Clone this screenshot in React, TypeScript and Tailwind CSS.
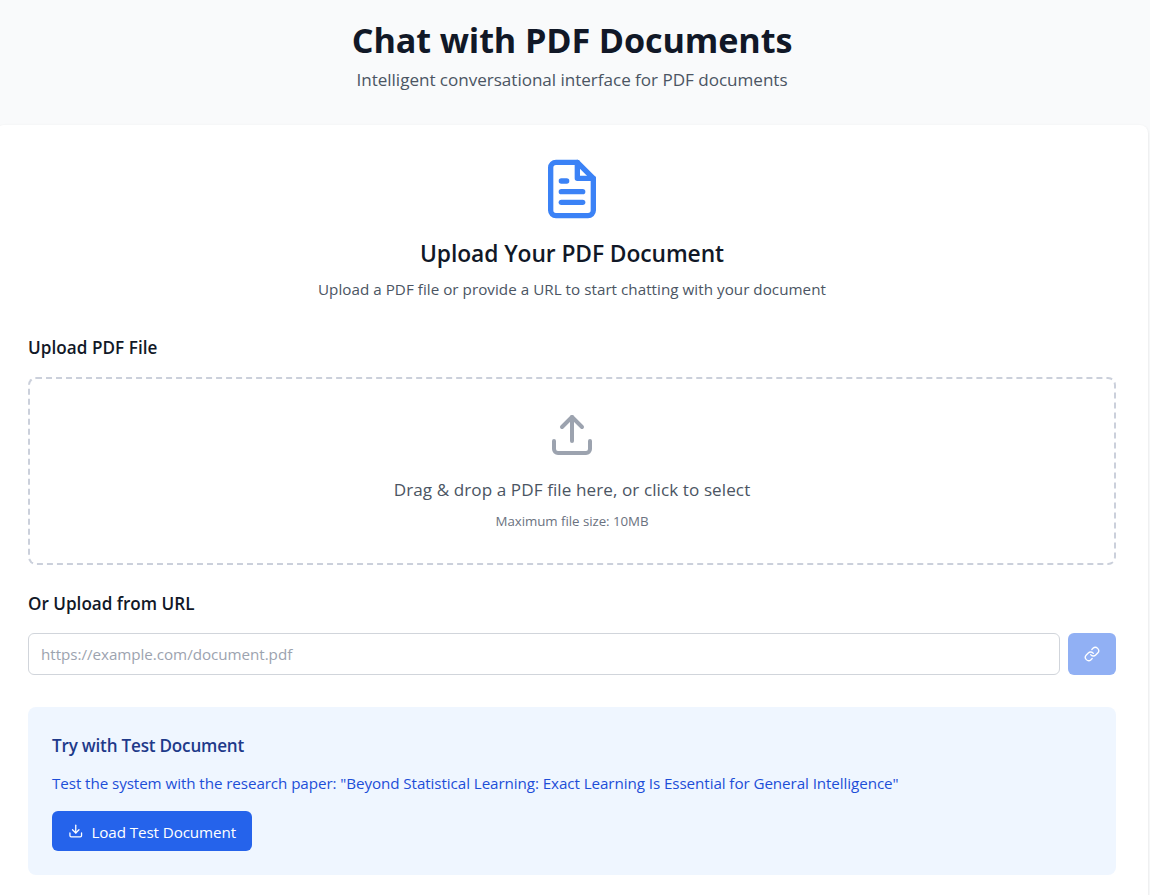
import { FiDownload, FiFileText, FiLink, FiUpload } from "react-icons/fi";

export default function App() {
  return (
    <div className="h-[895px] overflow-hidden bg-[#f9fafb] pt-[17px] font-['Open_Sans','Noto_Sans',sans-serif] text-[#111827]">
      <div className="-ml-1 w-[1152px]">
        <header className="mb-8 text-center">
          <h1 className="mb-[5px] pt-[3px] text-[34.2px] leading-10 font-bold tracking-[-0.131px]">Chat with PDF Documents</h1>
          <p className="pt-px text-[17.1px] leading-[27px] tracking-[-0.034px] text-[#4b5563]">
            Intelligent conversational interface for PDF documents
          </p>
        </header>

        <main className="rounded-lg bg-white p-8 shadow-sm">
          <div className="mb-8 text-center">
            <FiFileText className="mx-auto mb-4 size-16 text-[#3b82f6]" />
            <h2 className="mb-[7px] pt-px text-[22.8px] leading-8 font-semibold tracking-[-0.082px]">Upload Your PDF Document</h2>
            <p className="pt-px text-[15.2px] leading-[23px] tracking-[0.034px] text-[#4b5563]">
              Upload a PDF file or provide a URL to start chatting with your document
            </p>
          </div>

          <section className="mb-6">
            <h3 className="mb-4 pt-px text-[17.1px] leading-[27px] font-semibold tracking-[0.06px]">Upload PDF File</h3>
            <div className="rounded-lg border-2 border-dashed border-[#cbd0db] p-8 text-center">
              <FiUpload className="mx-auto mb-4 size-12 text-[#9ca3af]" />
              <p className="mb-2 pt-px text-[17.1px] leading-[27px] tracking-[0.08px] text-[#4b5563]">
                Drag &amp; drop a PDF file here, or click to select
              </p>
              <p className="text-[13.3px] leading-5 tracking-[-0.048px] text-[#6b7280]">Maximum file size: 10MB</p>
            </div>
          </section>

          <section className="mb-8">
            <h3 className="mb-4 pt-px text-[17.1px] leading-[27px] font-semibold">Or Upload from URL</h3>
            <div className="flex gap-2">
              <input
                type="url"
                placeholder="https://example.com/document.pdf"
                className="h-[42px] flex-1 rounded-md border border-[#d1d5db] bg-white px-3 text-[15.2px] tracking-[-0.04px] placeholder:text-[#9ca3af]"
              />
              <button className="flex h-[42px] w-12 items-center justify-center rounded-md bg-[#2563eb] text-white opacity-50" disabled>
                <FiLink className="size-4" />
              </button>
            </div>
          </section>

          <section className="rounded-lg bg-[#eff6ff] p-6">
            <h3 className="mb-3 pt-px text-[17.1px] leading-[27px] font-semibold tracking-[-0.205px] text-[#1e3a8a]">
              Try with Test Document
            </h3>
            <p className="mb-4 pt-px text-[15.2px] leading-[23px] tracking-[-0.08px] text-[#1d4ed8]">
              Test the system with the research paper: "Beyond Statistical Learning: Exact Learning Is Essential for General
              Intelligence"
            </p>
            <button className="flex h-10 w-[200px] items-center gap-2 rounded-md bg-[#2563eb] px-4 text-[15.2px] tracking-[-0.099px] whitespace-nowrap text-white">
              <FiDownload className="size-4" />
              <span className="pt-0.5">Load Test Document</span>
            </button>
          </section>
        </main>
      </div>
    </div>
  );
}
